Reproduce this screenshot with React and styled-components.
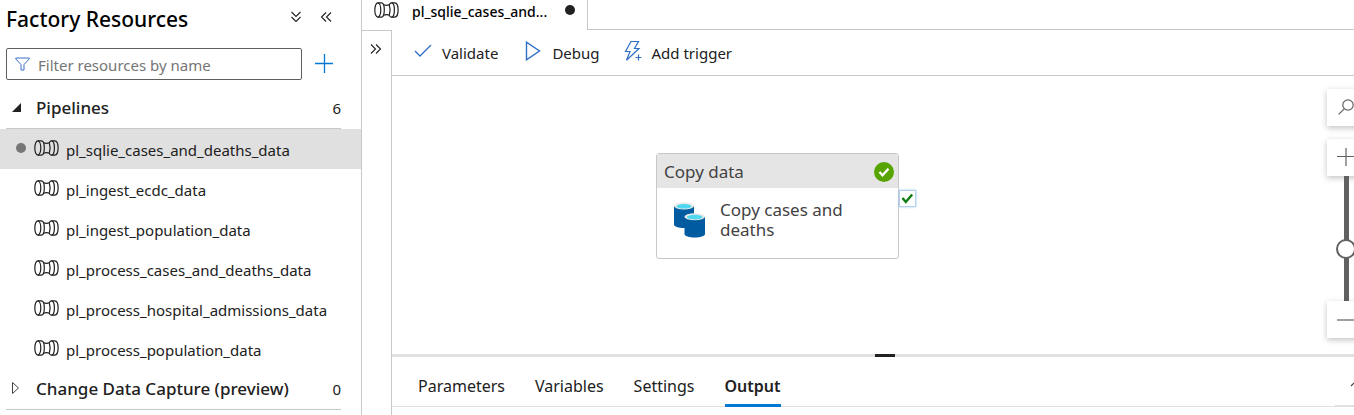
import React from "react";
import styled, { createGlobalStyle } from "styled-components";

const GlobalStyle = createGlobalStyle`
  *, *::before, *::after { box-sizing: border-box; }
  body {
    margin: 0;
    background: #fff;
    color: #212121;
    font-family: "Noto Sans", "Open Sans", sans-serif;
    font-size: 15px;
    line-height: 20px;
    overflow: hidden;
  }
  button, input { font: inherit; color: inherit; }
  button { padding: 0; border: 0; background: none; cursor: pointer; }
  svg { display: block; flex: none; }
`;

const Shell = styled.div`
  display: flex;
  height: 100vh;
  overflow: hidden;
`;

/* Resource explorer */

const Sidebar = styled.aside`
  flex: none;
  width: 362px;
  border-right: 1px solid #c8c8c8;
`;

const SidebarHeader = styled.header`
  display: flex;
  align-items: center;
  height: 38px;
  padding: 0 29px 0 6px;
`;

const SidebarTitle = styled.h1`
  flex: 1;
  margin: 0;
  font-size: 21px;
  line-height: 28px;
  font-weight: 500;
  color: #000;
`;

const HeaderActions = styled.div`
  display: flex;
  align-items: center;
  gap: 18px;
  padding-bottom: 4px;
`;

const IconButton = styled.button`
  display: flex;
  align-items: center;
  justify-content: center;
`;

const FilterRow = styled.div`
  display: flex;
  align-items: center;
  gap: 12px;
  height: 50px;
  padding: 2px 27px 0 6px;
`;

const FilterBox = styled.label`
  display: flex;
  flex: 1;
  align-items: center;
  gap: 8px;
  height: 32px;
  padding: 0 8px;
  border: 1px solid #605e5c;
  border-radius: 2px;
`;

const FilterInput = styled.input`
  flex: 1;
  min-width: 0;
  height: 28px;
  padding: 2px 0 0;
  border: 0;
  outline: 0;
  background: none;
  &::placeholder { color: #757575; opacity: 1; }
`;

const GroupButton = styled.button`
  display: flex;
  align-items: center;
  width: calc(100% - 26px);
  height: 41px;
  margin: 0 20px 0 6px;
  padding-left: 4px;
  border-bottom: 1px solid #c8c8c8;
  text-align: left;
`;

const GroupName = styled.span`
  flex: 1;
  padding-left: 12px;
  font-size: 17px;
  font-weight: 500;
`;

const ResourceList = styled.ul`
  margin: 0;
  padding: 0;
  list-style: none;
`;

const ResourceButton = styled.button`
  display: flex;
  align-items: center;
  width: 100%;
  height: 40px;
  padding: 0 0 2px 16px;
  background: ${(p) => (p.$selected ? "#e0e0e0" : "transparent")};
  text-align: left;
`;

const ChangeDot = styled.span`
  width: 10px;
  height: 10px;
  margin-right: 8px;
  border-radius: 50%;
  background: ${(p) => (p.$visible ? "#767676" : "transparent")};
`;

const ResourceName = styled.span`
  padding: 3px 0 0 7px;
`;

/* Editor */

const Editor = styled.main`
  display: flex;
  flex: 1;
  flex-direction: column;
  min-width: 0;
  margin-right: -24px;
`;

const TabStrip = styled.div`
  display: flex;
  height: 30px;
`;

const FileTab = styled.button`
  display: flex;
  align-items: center;
  width: 226px;
  padding: 0 12px 10px;
  border-right: 1px solid #c8c8c8;
  color: #000;
`;

const FileName = styled.span`
  flex: 1;
  padding: 3px 0 0 13px;
  font-size: 14px;
  font-weight: 500;
  text-align: left;
`;

const UnsavedDot = styled.span`
  width: 10px;
  height: 10px;
  border-radius: 50%;
  background: #212121;
`;

const TabStripRest = styled.div`
  flex: 1;
  border-bottom: 1px solid #c8c8c8;
`;

const EditorBody = styled.div`
  display: flex;
  flex: 1;
  min-height: 0;
`;

const Rail = styled.div`
  display: flex;
  flex: none;
  align-items: flex-start;
  justify-content: center;
  width: 30px;
  padding: 12px 2px 0 0;
  border-top: 1px solid #c8c8c8;
  border-right: 1px solid #c8c8c8;
`;

const Workspace = styled.div`
  display: flex;
  flex: 1;
  flex-direction: column;
  min-width: 0;
`;

const Toolbar = styled.div`
  display: flex;
  align-items: center;
  gap: 24px;
  height: 46px;
  padding: 0 22px;
  border-bottom: 1px solid #c8c8c8;
`;

const ToolButton = styled.button`
  display: flex;
  align-items: center;
  gap: 10px;
  svg { margin-bottom: 4px; }
`;

const Canvas = styled.div`
  position: relative;
  flex: 1;
  min-height: 0;
`;

const Activity = styled.article`
  position: absolute;
  left: 264px;
  top: 77px;
  width: 243px;
  height: 106px;
  border: 1px solid #c8c8c8;
  border-radius: 3px;
  background: #fff;
  color: #424242;
`;

const ActivityHeader = styled.header`
  display: flex;
  align-items: center;
  justify-content: space-between;
  height: 34px;
  padding: 1px 4px 0 7px;
  background: #e5e5e5;
  font-size: 17px;
`;

const ActivityBody = styled.div`
  display: flex;
  gap: 14px;
  padding: 12px 16px;
  font-size: 17px;
  svg { margin-top: 2px; }
`;

const SuccessPort = styled.span`
  position: absolute;
  left: 242px;
  top: 36px;
  display: flex;
  align-items: center;
  justify-content: center;
  width: 17px;
  height: 17px;
  border: 1px solid #b4d2f0;
  background: #fff;
  box-shadow: 0 0 2px #9cc6ee;
`;

const ZoomControls = styled.div`
  position: absolute;
  top: 13px;
  right: 13px;
  display: flex;
  flex-direction: column;
  align-items: center;
`;

const ZoomButton = styled.button`
  display: flex;
  align-items: center;
  justify-content: center;
  width: 38px;
  height: 37px;
  padding-bottom: 2px;
  margin-bottom: ${(p) => (p.$spaced ? "13px" : "0")};
  background: #fff;
  box-shadow: 0 2px 6px rgba(0, 0, 0, 0.24);
`;

const ZoomTrack = styled.div`
  display: flex;
  align-items: center;
  justify-content: center;
  width: 5px;
  height: 125px;
  background: #616161;
`;

const ZoomThumb = styled.div`
  flex: none;
  width: 20px;
  height: 20px;
  margin-top: 20px;
  border: 2px solid #616161;
  border-radius: 50%;
  background: #fff;
`;

const Splitter = styled.div`
  display: flex;
  justify-content: center;
  height: 3px;
  background: #e0e0e0;
`;

const SplitterGrip = styled.span`
  width: 20px;
  background: #212121;
`;

const Details = styled.section`
  height: 58px;
`;

const DetailTabs = styled.div`
  display: flex;
  height: 50px;
  padding-left: 26px;
  gap: 30px;
  border-bottom: 1px solid #e0e0e0;
`;

const DetailTab = styled.button`
  height: 50px;
  padding-top: ${(p) => (p.$active ? "11px" : "8px")};
  border-bottom: ${(p) => (p.$active ? "3px solid #0078d4" : "0")};
  font-size: 16px;
  font-weight: ${(p) => (p.$active ? 600 : 400)};
`;

const CollapseButton = styled.button`
  display: flex;
  justify-content: center;
  width: 43px;
  height: 49px;
  margin-left: auto;
  padding-top: 22px;
  border-bottom: 1px solid #e0e0e0;
`;

const PipelineIcon = () => (
  <svg width="25" height="16" viewBox="0 0 25 16" fill="none" stroke="#212121" strokeWidth="1.2">
    <ellipse cx="3.800" cy="8" rx="3" ry="7.200" />
    <path d="M3.800.8h3.700c1.700 0 2.800 3.200 2.800 7.200s-1.100 7.200-2.800 7.200H3.800" />
    <path d="M9.500 2.800c2 .7 4 .7 6 0M9.500 13.200c2-.7 4-.7 6 0" />
    <path d="M15.300 3C15.600 1.500 16.300.8 17.200.8h3.600c2 0 3.300 3.200 3.300 7.200s-1.300 7.200-3.300 7.200h-3.600c-.9 0-1.600-.7-1.900-2.200" />
    <path d="M17.500.8c1.900 0 2.900 3.200 2.900 7.200s-1 7.200-2.900 7.200" />
    <path d="M15.300 3c1 3 1 7 0 10" />
  </svg>
);

const DoubleChevron = ({ turn = 0 }) => (
  <svg width="12" height="12" viewBox="0 0 12 12" fill="none" stroke="#212121" strokeWidth="1.1">
    <path transform={`rotate(${turn} 6 6)`} d="M1 1.500L5.500 6 1 10.500M6 1.500L10.500 6 6 10.500" />
  </svg>
);

const FilterIcon = () => (
  <svg width="15" height="14" viewBox="0 0 15 14" fill="none" stroke="#3b6fc9" strokeWidth="1">
    <path d="M.8 1h13.400v1L9 7.500v5.500H6V7.500L.8 2z" />
  </svg>
);

const AddIcon = () => (
  <svg width="20" height="20" viewBox="0 0 20 20" stroke="#0078d4" strokeWidth="1.3">
    <path d="M1 9.500h18M10.500 0v19" />
  </svg>
);

const OpenMarker = () => (
  <svg width="14" height="12" viewBox="0 0 14 12">
    <path d="M11 1v9H2z" fill="#212121" />
  </svg>
);

const ClosedMarker = () => (
  <svg width="14" height="14" viewBox="0 0 14 14" fill="none" stroke="#424242">
    <path d="M2.500 .5v11L8.500 6z" />
  </svg>
);

const ValidateIcon = () => (
  <svg width="18" height="20" viewBox="0 0 18 20" fill="none" stroke="#2f6fc4" strokeWidth="1.300">
    <path d="M1 10l5 5L17 4" />
  </svg>
);

const DebugIcon = () => (
  <svg width="20" height="20" viewBox="0 0 20 20" fill="none" stroke="#2f6fc4" strokeWidth="1.400">
    <path d="M4.500 1.200v17.600L17.500 10z" />
  </svg>
);

const TriggerIcon = () => (
  <svg width="18" height="22" viewBox="0 0 18 22" fill="none" stroke="#2f6fc4" strokeWidth="1.200">
    <path d="M7 1.500h7.500L10.500 8.500h4.500L2.500 20.300 6 11.500H1.500z" />
    <path d="M14.500 14.500v6M11.500 17.500h6" />
  </svg>
);

const SuccessIcon = () => (
  <svg width="20" height="20" viewBox="0 0 20 20">
    <circle cx="10" cy="10" r="10" fill="#57a300" />
    <path d="M5.500 10l3 3.300 6-6.500" fill="none" stroke="#fff" strokeWidth="2.400" />
  </svg>
);

const CopyDataIcon = () => (
  <svg width="33" height="36" viewBox="0 0 33 36">
    <path d="M1 4v18.500C1 24.500 5.500 26 11 26s10-1.500 10-3.500V4z" fill="#005ba1" />
    <ellipse cx="11" cy="4" rx="10" ry="3.400" fill="#e8e8e8" />
    <ellipse cx="11" cy="4.300" rx="7.500" ry="2.300" fill="#50d8f0" />
    <path d="M11.500 15v17c0 2 4.700 3.500 10.200 3.500S32 34 32 32V15z" fill="#005ba1" />
    <ellipse cx="21.700" cy="14.800" rx="10.300" ry="3.500" fill="#e8e8e8" />
    <ellipse cx="21.700" cy="15.100" rx="7.800" ry="2.400" fill="#50d8f0" />
  </svg>
);

const PortCheck = () => (
  <svg width="13" height="13" viewBox="0 0 13 13" fill="none" stroke="#107c10" strokeWidth="2.400">
    <path d="M1.500 6l3.300 4 6.400-7.500" />
  </svg>
);

const SearchIcon = () => (
  <svg width="16" height="16" viewBox="0 0 16 16" fill="none" stroke="#616161" strokeWidth="1.200">
    <circle cx="10" cy="6" r="5.200" />
    <path d="M6.200 9.800L.6 15.400" />
  </svg>
);

const PlusIcon = () => (
  <svg width="18" height="18" viewBox="0 0 18 18" stroke="#616161" strokeWidth="1.200">
    <path d="M0 8.500h18M9 0v18" />
  </svg>
);

const MinusIcon = () => (
  <svg width="18" height="18" viewBox="0 0 18 18" stroke="#616161" strokeWidth="1.200">
    <path d="M0 10h18" />
  </svg>
);

const CollapseIcon = () => (
  <svg width="14" height="8" viewBox="0 0 14 8" fill="none" stroke="#424242" strokeWidth="1.200">
    <path d="M1 7l6-6 6 6" />
  </svg>
);

const pipelines = [
  "pl_sqlie_cases_and_deaths_data",
  "pl_ingest_ecdc_data",
  "pl_ingest_population_data",
  "pl_process_cases_and_deaths_data",
  "pl_process_hospital_admissions_data",
  "pl_process_population_data",
];

const detailTabs = ["Parameters", "Variables", "Settings", "Output"];

export default function App() {
  return (
    <Shell>
      <GlobalStyle />
      <Sidebar>
        <SidebarHeader>
          <SidebarTitle>Factory Resources</SidebarTitle>
          <HeaderActions>
            <IconButton aria-label="Expand all"><DoubleChevron turn={90} /></IconButton>
            <IconButton aria-label="Collapse panel"><DoubleChevron turn={180} /></IconButton>
          </HeaderActions>
        </SidebarHeader>
        <FilterRow>
          <FilterBox>
            <FilterIcon />
            <FilterInput aria-label="Filter resources" placeholder="Filter resources by name" />
          </FilterBox>
          <IconButton aria-label="Add resource"><AddIcon /></IconButton>
        </FilterRow>
        <GroupButton aria-expanded="true">
          <OpenMarker />
          <GroupName>Pipelines</GroupName>
          <span>6</span>
        </GroupButton>
        <ResourceList>
          {pipelines.map((name, i) => (
            <li key={name}>
              <ResourceButton $selected={i === 0}>
                <ChangeDot $visible={i === 0} />
                <PipelineIcon />
                <ResourceName>{name}</ResourceName>
              </ResourceButton>
            </li>
          ))}
        </ResourceList>
        <GroupButton aria-expanded="false">
          <ClosedMarker />
          <GroupName>Change Data Capture (preview)</GroupName>
          <span>0</span>
        </GroupButton>
      </Sidebar>

      <Editor>
        <TabStrip>
          <FileTab>
            <PipelineIcon />
            <FileName>pl_sqlie_cases_and...</FileName>
            <UnsavedDot />
          </FileTab>
          <TabStripRest />
        </TabStrip>
        <EditorBody>
          <Rail>
            <IconButton aria-label="Show activities"><DoubleChevron /></IconButton>
          </Rail>
          <Workspace>
            <Toolbar>
              <ToolButton><ValidateIcon />Validate</ToolButton>
              <ToolButton><DebugIcon />Debug</ToolButton>
              <ToolButton><TriggerIcon />Add trigger</ToolButton>
            </Toolbar>
            <Canvas>
              <Activity>
                <ActivityHeader>
                  <span>Copy data</span>
                  <SuccessIcon />
                </ActivityHeader>
                <ActivityBody>
                  <CopyDataIcon />
                  <span>Copy cases and deaths</span>
                </ActivityBody>
                <SuccessPort><PortCheck /></SuccessPort>
              </Activity>
              <ZoomControls>
                <ZoomButton $spaced aria-label="Search"><SearchIcon /></ZoomButton>
                <ZoomButton aria-label="Zoom in"><PlusIcon /></ZoomButton>
                <ZoomTrack><ZoomThumb /></ZoomTrack>
                <ZoomButton aria-label="Zoom out"><MinusIcon /></ZoomButton>
              </ZoomControls>
            </Canvas>
            <Splitter><SplitterGrip /></Splitter>
            <Details>
              <DetailTabs>
                {detailTabs.map((name) => (
                  <DetailTab key={name} $active={name === "Output"}>{name}</DetailTab>
                ))}
                <CollapseButton aria-label="Collapse details"><CollapseIcon /></CollapseButton>
              </DetailTabs>
            </Details>
          </Workspace>
        </EditorBody>
      </Editor>
    </Shell>
  );
}
